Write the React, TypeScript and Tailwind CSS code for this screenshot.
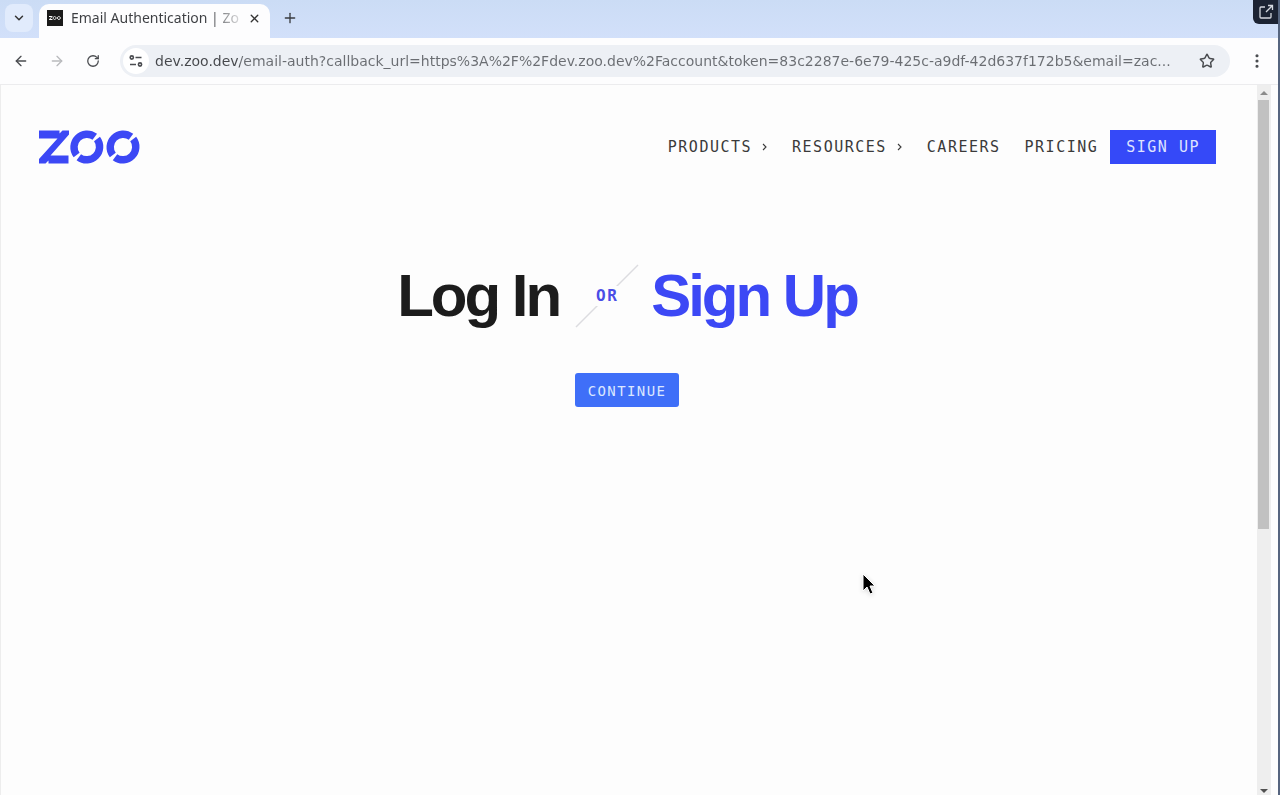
import React from "react";
import {
  ArrowLeft,
  ArrowRight,
  ChevronDown,
  EllipsisVertical,
  Plus,
  RotateCw,
  Star,
  X,
} from "lucide-react";

const PAGE_URL =
  "dev.zoo.dev/email-auth?callback_url=https%3A%2F%2Fdev.zoo.dev%2Faccount&token=83c2287e-6e79-425c-a9df-42d637f172b5&email=zac...";

const links = [
  { label: "PRODUCTS", menu: true },
  { label: "RESOURCES", menu: true },
  { label: "CAREERS", menu: false },
  { label: "PRICING", menu: false },
];

function ZooLogo({ className }: { className?: string }) {
  return (
    <svg className={className} viewBox="0 0 102 34" fill="none" aria-hidden="true">
      <path
        d="M0 .5h20.5v3L23.5.5H30v4L11.5 25.5H29.5v8H9.5v-3l-3 3H0v-4.500L18.500 8.500H0z"
        fill="currentColor"
      />
      <g stroke="currentColor" strokeWidth="7.4">
        <path d="M37.6 25A13 13 0 0 1 55.8 6.8" />
        <path d="M58 9A13 13 0 0 1 39.8 27.2" />
        <path d="M73.8 25A13 13 0 0 1 92 6.8" />
        <path d="M94.2 9A13 13 0 0 1 76 27.2" />
      </g>
    </svg>
  );
}

function TabStrip() {
  return (
    <div className="flex h-[38px] items-end bg-linear-to-b from-[#cbdcf5] to-[#d2e0fa] pl-[5px]">
      <button
        aria-label="Search tabs"
        className="mb-1.5 flex size-7 items-center justify-center rounded-lg bg-[#e1ebfc] text-[#333]"
      >
        <ChevronDown size={14} strokeWidth={2.5} />
      </button>
      <div className="ml-1.5 flex h-[34px] w-[231px] items-center rounded-t-[10px] bg-[#fdfdfe] px-2 pb-1.5">
        <span className="flex size-4 items-center justify-center bg-[#1b1b1b] text-white">
          <ZooLogo className="w-3" />
        </span>
        <span className="ml-2 bg-[linear-gradient(to_right,#3c3e42_138px,transparent_175px)] bg-clip-text font-['Noto_Sans',sans-serif] text-sm leading-5 whitespace-nowrap text-transparent">
          Email Authentication | Zo
        </span>
        <button aria-label="Close tab" className="ml-auto p-px text-[#333]">
          <X size={13} strokeWidth={2.5} />
        </button>
      </div>
      <button aria-label="New tab" className="mb-3 ml-3 text-[#3a3c40]">
        <Plus size={16} strokeWidth={2} />
      </button>
    </div>
  );
}

function Toolbar() {
  return (
    <div className="flex h-[47px] items-center border-b border-[#ececee] bg-[#fdfdfe] px-3 text-[#4a4c50]">
      <button aria-label="Back" className="flex w-[18px] justify-center">
        <ArrowLeft size={16} />
      </button>
      <button aria-label="Forward" className="ml-[18px] flex w-[18px] justify-center text-[#b9babd]">
        <ArrowRight size={16} />
      </button>
      <button aria-label="Reload" className="ml-[18px] flex w-[18px] justify-center">
        <RotateCw size={14} strokeWidth={2.2} />
      </button>
      <div className="ml-[18px] flex h-8 flex-1 items-center rounded-full bg-[#edf0f5] pr-[15px] pl-[3px]">
        <button
          aria-label="View site information"
          className="flex size-[26px] items-center justify-center rounded-full bg-white"
        >
          <svg
            className="size-3.5"
            viewBox="0 0 14 14"
            fill="none"
            stroke="currentColor"
            strokeWidth="1.6"
          >
            <circle cx="2.8" cy="3.5" r="1.6" />
            <path d="M6.5 3.5h6M1 10.5h6" />
            <circle cx="11" cy="10.5" r="1.6" />
          </svg>
        </button>
        <input
          aria-label="Address"
          readOnly
          value={PAGE_URL}
          className="ml-1.5 min-w-0 flex-1 bg-[linear-gradient(to_right,#45474b_85px,#6a6d72_85px)] bg-clip-text font-['DejaVu_Sans',sans-serif] text-sm text-transparent outline-none"
        />
        <button aria-label="Bookmark this page" className="ml-4">
          <Star size={16} strokeWidth={2.2} />
        </button>
      </div>
      <button aria-label="Menu" className="ml-[18px]">
        <EllipsisVertical size={18} strokeWidth={2.2} />
      </button>
    </div>
  );
}

function SiteHeader() {
  return (
    <header className="flex items-center justify-between pt-[45px] pr-[41px] pl-[38px]">
      <a href="#" aria-label="Zoo" className="text-[#3c48f5]">
        <ZooLogo className="w-[102px]" />
      </a>
      <nav className="flex items-center font-['DejaVu_Sans_Mono',monospace] text-[15px] leading-5 tracking-widest text-[#3a3a3a]">
        {links.map((link) => (
          <a key={link.label} href="#" className="flex items-center gap-2 px-3">
            {link.label}
            {link.menu && (
              <svg className="h-2 w-2" viewBox="0 0 8 8" fill="none" stroke="currentColor">
                <path d="M3 1l3 3-3 3" strokeWidth="1.1" />
              </svg>
            )}
          </a>
        ))}
        <a href="#" className="bg-[#3549f8] px-4 py-[7px] text-[#dfe3ff]">
          SIGN UP
        </a>
      </nav>
    </header>
  );
}

function Scrollbar() {
  return (
    <div className="flex w-3.5 flex-col items-center bg-[#eeeeee] pt-1.5" aria-hidden="true">
      <svg className="h-1 w-2" viewBox="0 0 8 4" fill="#8c8c8c">
        <path d="M4 0l4 4H0z" />
      </svg>
      <div className="mt-[5px] mb-2 w-full flex-1 pr-0.5 pl-px">
        <div className="h-[63%] bg-[#c1c1c1]" />
      </div>
      <svg className="mb-0.5 h-1 w-2" viewBox="0 0 8 4" fill="#505050">
        <path d="M0 0h8L4 4z" />
      </svg>
    </div>
  );
}

export default function App() {
  return (
    <div className="relative flex h-screen flex-col overflow-hidden border-r-2 border-[#56657f] bg-[#fdfdfd]">
      <TabStrip />
      <Toolbar />

      <div className="flex flex-1 pr-[7px]">
        <div className="flex-1 border-l border-[#ededed]">
          <SiteHeader />
          <main className="flex flex-col items-center pt-[100px] pr-1">
            <h1 className="flex items-center gap-3 font-['Liberation_Sans',sans-serif] text-[60px] leading-[64px] font-bold tracking-tighter text-[#1c1c1c]">
              <span className="pr-1">Log In</span>
              <span className="relative flex size-16 items-center justify-center">
                <svg
                  className="absolute inset-0 size-full"
                  viewBox="0 0 64 64"
                  stroke="#dcdce0"
                  strokeWidth="1.5"
                >
                  <path d="M1 63L63 1" />
                </svg>
                <span className="relative bg-[#fdfdfd] font-['DejaVu_Sans_Mono',monospace] text-base leading-5 font-bold tracking-widest text-[#4a4de6]">
                  OR
                </span>
              </span>
              <span className="text-[#3c48f5]">Sign Up</span>
            </h1>
            <button className="mt-[45px] rounded-[3px] bg-[#3f6ff8] px-[13px] pt-2 pb-1.5 font-['DejaVu_Sans_Mono',monospace] text-sm leading-5 tracking-widest text-[#dbe7ff]">
              CONTINUE
            </button>
          </main>
        </div>
        <Scrollbar />
      </div>

      {/* Pop-out control over the window corner */}
      <button
        aria-label="Open in new window"
        className="absolute top-0 right-0 flex h-6 w-[25px] items-center justify-center rounded-bl-md bg-[#1c2333] text-[#d5d8df]"
      >
        <svg className="size-4" viewBox="0 0 16 16" fill="none" stroke="currentColor" strokeWidth="1.3">
          <path d="M7 3H3a1 1 0 0 0-1 1v9a1 1 0 0 0 1 1h9a1 1 0 0 0 1-1V9M10 1.5h4.5V6M14.5 1.5L8 8" />
        </svg>
      </button>

      {/* Mouse pointer */}
      <svg
        className="absolute top-[572px] left-[861px] h-6 w-4 drop-shadow-sm"
        viewBox="0 0 16 24"
        aria-hidden="true"
      >
        <path
          d="M2 2v17l4-4 3 7 3-1-3-7h5z"
          fill="#000"
          stroke="#fff"
          strokeWidth="1"
        />
      </svg>
    </div>
  );
}
